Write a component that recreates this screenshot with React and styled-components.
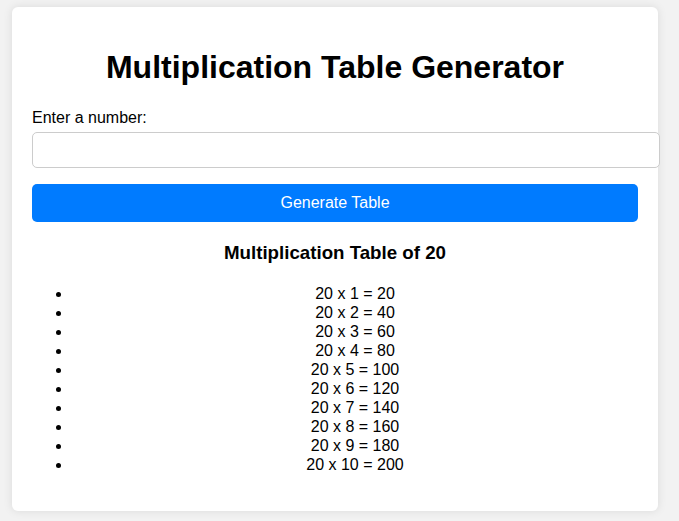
import React, { useState } from 'react';
import styled, { createGlobalStyle } from 'styled-components';

const GlobalStyle = createGlobalStyle`
  html, body {
    margin: 0;
    padding: 0;
    background-color: #f2f2f2;
    font-family: "Liberation Sans", Arial, sans-serif;
  }
`;

const Page = styled.div`
  padding: 7px 21px 10px 12px;
`;

const Card = styled.div`
  background-color: #fff;
  border-radius: 6px;
  box-shadow: 0 0 10px rgba(0, 0, 0, 0.1);
  padding: 20px;
  text-align: center;
`;

const Title = styled.h1`
  font-size: 32px;
  margin: 22px 0 23px;
  color: #000;
`;

const Label = styled.label`
  display: block;
  text-align: left;
  font-size: 16px;
  line-height: 18px;
  margin: 0 0 5px;
`;

const NumberInput = styled.input`
  display: block;
  width: 100%;
  box-sizing: content-box;
  padding: 8px 10px;
  font-size: 16px;
  line-height: 18px;
  height: 18px;
  border: 1px solid #ccc;
  border-radius: 5px;
  font-family: inherit;
  outline: none;
`;

const Button = styled.button`
  display: block;
  width: 100%;
  margin-top: 16px;
  padding: 10px;
  font-size: 16px;
  line-height: 18px;
  font-family: inherit;
  color: #fff;
  background-color: #007bff;
  border: none;
  border-radius: 5px;
  cursor: pointer;
`;

const Subtitle = styled.h3`
  font-size: 18.72px;
  line-height: 22px;
  margin: 20px 0;
`;

const List = styled.ul`
  margin: 0 0 17px;
  padding-left: 40px;
`;

const Item = styled.li`
  font-size: 16px;
  line-height: 19px;
`;

const App = () => {
  const [value, setValue] = useState('');
  const [number, setNumber] = useState(20);

  const generate = () => {
    const n = parseInt(value, 10);
    if (!isNaN(n)) setNumber(n);
  };

  return (
    <>
      <GlobalStyle />
      <Page>
        <Card>
          <Title>Multiplication Table Generator</Title>
          <Label htmlFor="num">Enter a number:</Label>
          <NumberInput id="num" type="number" value={value} onChange={(e) => setValue(e.target.value)} />
          <Button onClick={generate}>Generate Table</Button>
          <Subtitle>Multiplication Table of {number}</Subtitle>
          <List>
            {Array.from({ length: 10 }, (_, i) => (
              <Item key={i}>
                {number} x {i + 1} = {number * (i + 1)}
              </Item>
            ))}
          </List>
        </Card>
      </Page>
    </>
  );
};

export default App;
